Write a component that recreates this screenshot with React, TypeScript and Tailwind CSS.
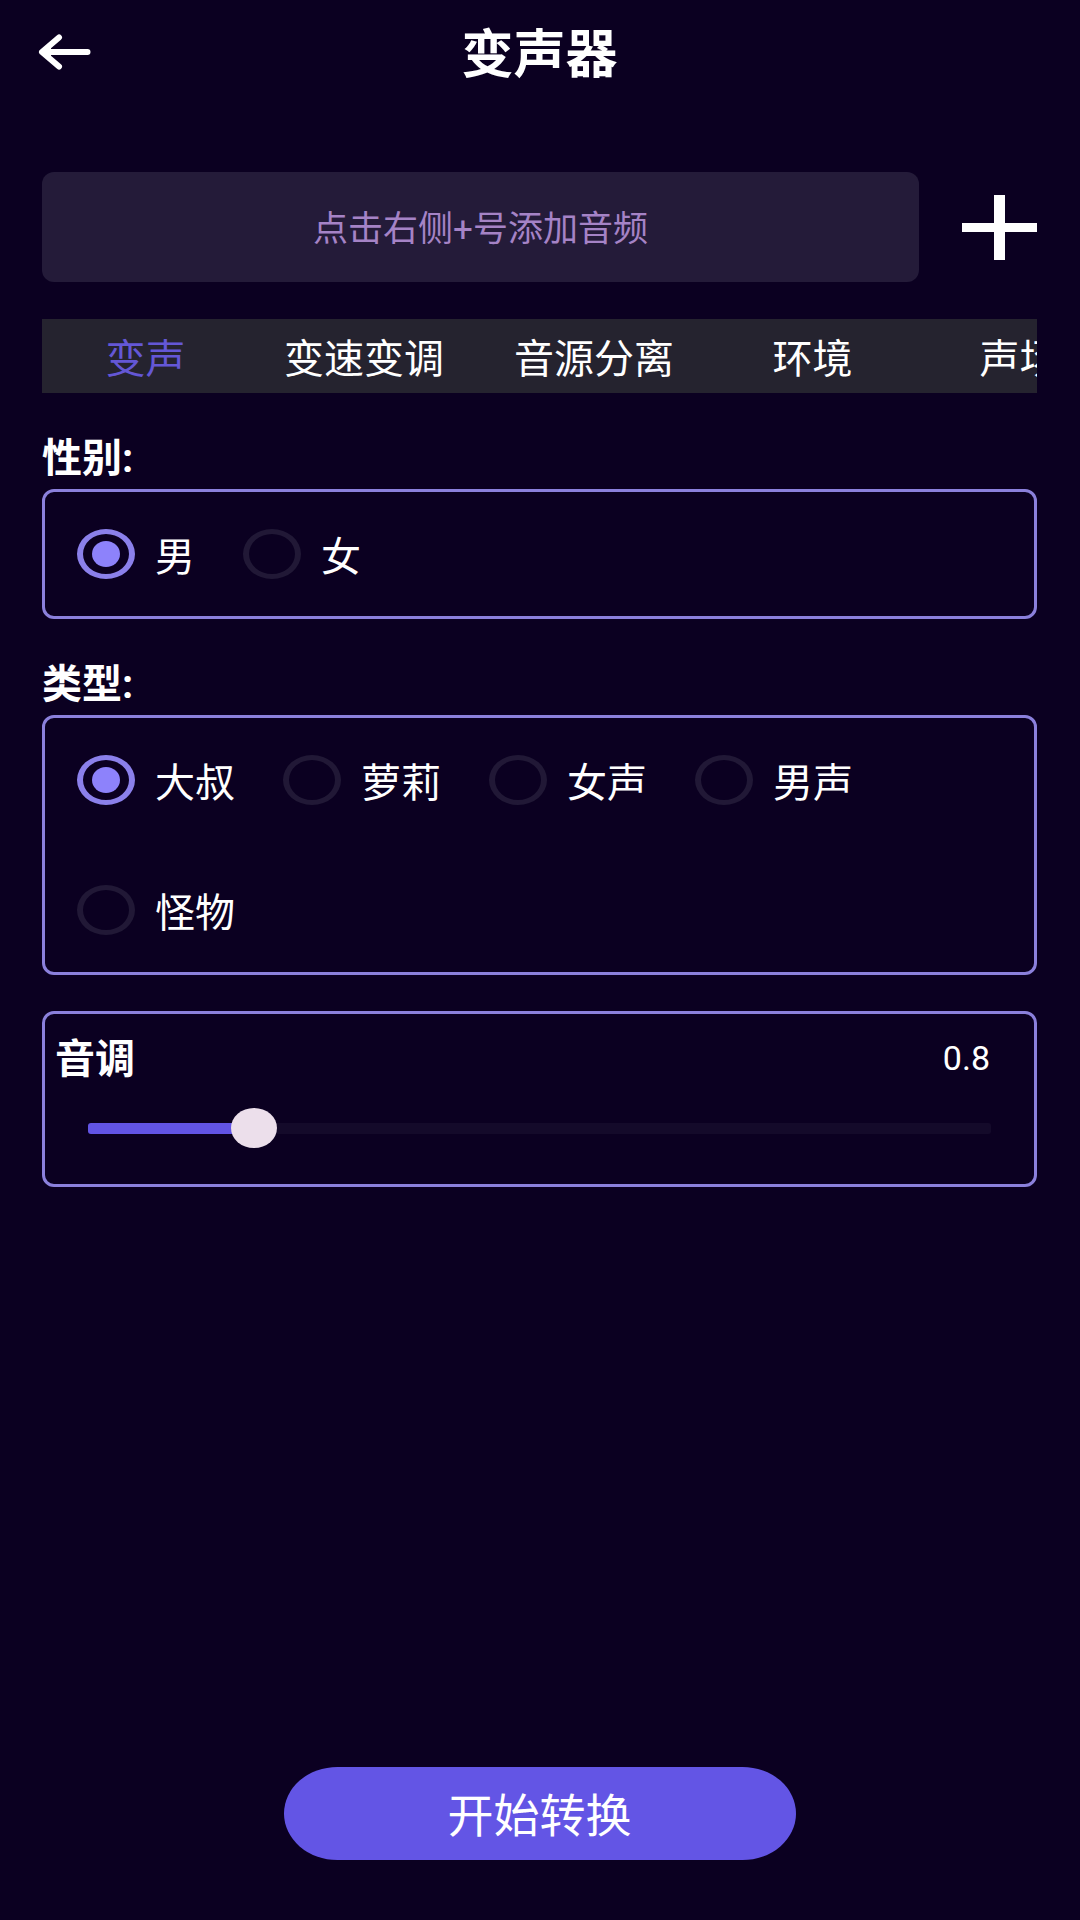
import React, { useState } from 'react';

const tabs = ['变声', '变速变调', '音源分离', '环境', '声场'];
const genders = ['男', '女'];
const voiceTypes = ['大叔', '萝莉', '女声', '男声', '怪物'];

const PITCH_MIN = 0.5;
const PITCH_MAX = 2.3;

interface RadioGroupProps {
  name: string;
  title: string;
  options: string[];
  value: string;
  onChange: (value: string) => void;
}

const RadioGroup = ({ name, title, options, value, onChange }: RadioGroupProps) => (
  <section className="mt-9">
    <h2 id={`${name}-title`} className="text-[40px] leading-[60px] font-bold">{title}</h2>
    <div
      role="radiogroup"
      aria-labelledby={`${name}-title`}
      className="flex flex-wrap gap-x-12 gap-y-[6px] rounded-xl border-3 border-[#8b80dc] px-8"
    >
      {options.map(option => (
        <label key={option} className="flex h-[124px] items-center gap-5 text-[40px] leading-[60px]">
          <input
            type="radio"
            name={name}
            value={option}
            checked={value === option}
            onChange={() => onChange(option)}
            className="grid h-[50px] w-[58px] shrink-0 appearance-none place-content-center rounded-[50%] border-x-6 border-y-5 border-[#211836] checked:border-[#8b80eb] checked:before:h-[26px] checked:before:w-7 checked:before:rounded-[50%] checked:before:bg-[#8d82fb]"
          />
          <span className="pt-2">{option}</span>
        </label>
      ))}
    </div>
  </section>
);

const App = () => {
  const [activeTab, setActiveTab] = useState('变声');
  const [gender, setGender] = useState('男');
  const [voiceType, setVoiceType] = useState('大叔');
  const [pitch, setPitch] = useState(0.8);

  const percent = ((pitch - PITCH_MIN) / (PITCH_MAX - PITCH_MIN)) * 100;

  return (
    <div className="flex min-h-screen flex-col bg-[#0b0021] pr-[43px] pl-[42px] pb-[60px] font-['Roboto','Noto_Sans_CJK_SC',sans-serif] text-white">
      <header className="grid h-[104px] grid-cols-[1fr_auto_1fr] items-center">
        <button type="button" aria-label="返回" className="-ml-1 w-fit">
          <svg width="53" height="36" viewBox="0 0 53 36" fill="none" stroke="currentColor" strokeWidth="6" strokeLinecap="round" strokeLinejoin="round">
            <path d="M21 3.5L4 18L21 32.5M5 18H49.500" />
            <path d="M4 18L13 11V25Z" fill="currentColor" stroke="none" />
          </svg>
        </button>
        <h1 className="pt-2 text-[52px] leading-[76px] font-bold">变声器</h1>
      </header>

      <div className="mt-[68px] flex items-center gap-[43px]">
        <input
          type="text"
          readOnly
          aria-label="音频"
          placeholder="点击右侧+号添加音频"
          className="h-[110px] min-w-0 flex-1 rounded-xl bg-[#241b39] pt-1 text-center text-[35px] placeholder:text-[#a583c6] placeholder:opacity-100"
        />
        <button type="button" aria-label="添加音频">
          <svg width="75" height="65" viewBox="0 0 75 65" fill="currentColor">
            <rect x="32" width="11" height="65" />
            <rect y="28" width="75" height="9" />
          </svg>
        </button>
      </div>

      {/* Scrollable tab bar */}
      <nav className="mt-[37px] flex overflow-x-auto bg-[#25232f] [scrollbar-width:none]">
        {tabs.map(tab => (
          <button
            key={tab}
            type="button"
            onClick={() => setActiveTab(tab)}
            className={`h-[74px] min-w-[207px] shrink-0 px-[35px] pt-2 text-[40px] leading-[60px] ${activeTab === tab ? 'text-[#6457d6]' : 'text-white'}`}
          >
            {tab}
          </button>
        ))}
      </nav>

      <RadioGroup name="gender" title="性别:" options={genders} value={gender} onChange={setGender} />
      <RadioGroup name="type" title="类型:" options={voiceTypes} value={voiceType} onChange={setVoiceType} />

      <section className="mt-9 rounded-xl border-3 border-[#8b80dc] pt-3 pb-9">
        <div className="flex items-center justify-between pr-11 pl-[10px]">
          <label htmlFor="pitch" className="pt-1 text-[40px] leading-[60px] font-bold">音调</label>
          <output htmlFor="pitch" className="text-[34px] leading-[60px]">{pitch}</output>
        </div>
        <div className="mt-[18px] flex px-[43px]">
          <input
            id="pitch"
            type="range"
            min={PITCH_MIN}
            max={PITCH_MAX}
            step={0.1}
            value={pitch}
            onChange={e => setPitch(Number(e.target.value))}
            style={{ '--fill': `${percent}%` } as React.CSSProperties}
            className="h-10 w-full appearance-none bg-transparent [&::-webkit-slider-runnable-track]:h-[11px] [&::-webkit-slider-runnable-track]:rounded-[3px] [&::-webkit-slider-runnable-track]:bg-[linear-gradient(to_right,#6254e5_var(--fill),#140a2a_var(--fill))] [&::-webkit-slider-thumb]:-mt-[15px] [&::-webkit-slider-thumb]:h-10 [&::-webkit-slider-thumb]:w-[46px] [&::-webkit-slider-thumb]:appearance-none [&::-webkit-slider-thumb]:rounded-[50%] [&::-webkit-slider-thumb]:bg-[#ecdfeb]"
          />
        </div>
      </section>

      <button
        type="button"
        className="mx-auto mt-auto h-[93px] w-full max-w-[512px] rounded-[54px/47px] bg-[#6355e5] pt-1 text-[46px] leading-[68px]"
      >
        开始转换
      </button>
    </div>
  );
};

export default App;
